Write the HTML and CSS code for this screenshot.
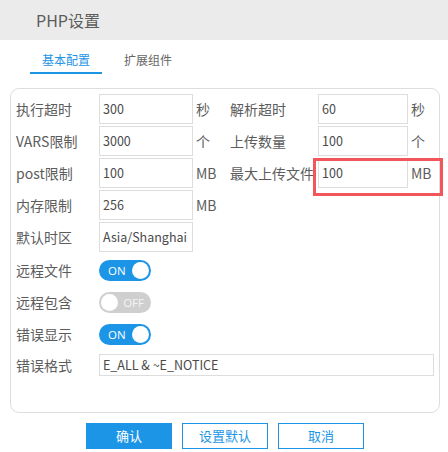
FILE: index.html
```html
<!DOCTYPE html>
<html lang="zh-CN">
<head>
<meta charset="utf-8">
<title>PHP设置</title>
<link rel="stylesheet" href="styles.css">
</head>
<body>
<div class="dialog">
  <div class="header">PHP设置</div>
  <div class="tabs">
    <div class="tab active">基本配置</div>
    <div class="tab">扩展组件</div>
  </div>
  <div class="card">
    <div class="grid">
      <div class="label">执行超时</div>
      <div class="input">300</div>
      <div class="unit">秒</div>
      <div class="label">解析超时</div>
      <div class="input">60</div>
      <div class="unit">秒</div>

      <div class="label">VARS限制</div>
      <div class="input">3000</div>
      <div class="unit">个</div>
      <div class="label">上传数量</div>
      <div class="input">100</div>
      <div class="unit">个</div>

      <div class="label">post限制</div>
      <div class="input">100</div>
      <div class="unit">MB</div>
      <div class="label">最大上传文件</div>
      <div class="highlight-group">
        <div class="input">100</div>
        <div class="unit">MB</div>
      </div>

      <div class="label">内存限制</div>
      <div class="input">256</div>
      <div class="unit">MB</div>
      <div class="filler"></div>

      <div class="label">默认时区</div>
      <div class="input">Asia/Shanghai</div>
      <div class="filler"></div>
    </div>

    <div class="switch-rows">
      <div class="switch-row">
        <div class="label">远程文件</div>
        <div class="toggle on"><span class="toggle-text">ON</span><span class="knob"></span></div>
      </div>
      <div class="switch-row">
        <div class="label">远程包含</div>
        <div class="toggle off"><span class="knob"></span><span class="toggle-text">OFF</span></div>
      </div>
      <div class="switch-row">
        <div class="label">错误显示</div>
        <div class="toggle on"><span class="toggle-text">ON</span><span class="knob"></span></div>
      </div>
      <div class="text-row">
        <div class="label">错误格式</div>
        <div class="input wide">E_ALL &amp; ~E_NOTICE</div>
      </div>
    </div>
  </div>
  <div class="buttons">
    <div class="btn primary">确认</div>
    <div class="btn">设置默认</div>
    <div class="btn">取消</div>
  </div>
</div>
</body>
</html>
```

FILE: styles.css
```css
* { box-sizing: border-box; }
html, body {
  margin: 0;
  padding: 0;
  background: #fff;
}
body {
  font-family: "Noto Sans CJK SC", "Open Sans", sans-serif;
  color: #5c5c5c;
  width: 448px;
  height: 452px;
  overflow: hidden;
}
.header {
  height: 40px;
  background: #ebebeb;
  padding-left: 36px;
  font-size: 16px;
  line-height: 40px;
  color: #5c5c5c;
}
.tabs {
  display: flex;
  padding: 9px 0 0 30px;
  height: 48px;
}
.tab {
  width: 72px;
  height: 25px;
  text-align: center;
  font-size: 12px;
  line-height: 22px;
  color: #666;
  margin-right: 10px;
}
.tab.active {
  color: #1c95e6;
  border-bottom: 2px solid #1c95e6;
}
.card {
  margin: 0 8px 0 10px;
  height: 325px;
  border: 1px solid #ddd;
  border-radius: 9px;
  padding: 5px 0 0 5px;
}
.grid {
  display: grid;
  grid-template-columns: 83px 94px 37px 88px 90px 1fr;
  grid-auto-rows: 30px;
  row-gap: 2px;
}
.label {
  font-size: 14px;
  line-height: 30px;
  color: #5c5c5c;
  white-space: nowrap;
}
.input {
  border: 1px solid #ddd;
  font-size: 12.5px;
  line-height: 27px;
  padding-left: 3px;
  color: #4a4a4a;
  white-space: nowrap;
  overflow: hidden;
}
.unit {
  font-size: 14px;
  line-height: 30px;
  padding-left: 3px;
  color: #5c5c5c;
}
.filler {
  grid-column: span 3;
}
.highlight-group {
  grid-column: span 2;
  display: flex;
  position: relative;
}
.highlight-group .input { width: 90px; }
.highlight-group::after {
  content: "";
  position: absolute;
  left: -5px;
  top: 0;
  width: 124px;
  height: 32px;
  border: 3px solid #f2555a;
}
.switch-rows {
  padding-top: 2px;
}
.switch-row {
  display: flex;
  align-items: center;
  height: 32px;
}
.switch-row .label,
.text-row .label {
  width: 83px;
}
.toggle {
  width: 52px;
  height: 21px;
  border-radius: 11px;
  display: flex;
  align-items: center;
  padding: 0 2px;
  font-family: "Open Sans", sans-serif;
  font-size: 11.5px;
  color: #fff;
}
.toggle.on {
  background: #1c95e6;
  justify-content: space-between;
  padding-left: 9px;
}
.toggle.off {
  background: #cfcfcf;
  justify-content: space-between;
  padding-right: 7px;
  color: #f4f4f4;
}
.knob {
  width: 17px;
  height: 17px;
  border-radius: 50%;
  background: #fff;
}
.text-row {
  display: flex;
  align-items: center;
  height: 30px;
}
.input.wide {
  width: 335px;
  height: 22px;
  line-height: 19px;
}
.buttons {
  display: flex;
  justify-content: center;
  gap: 10px;
  margin-top: 10px;
  padding-left: 2px;
}
.btn {
  width: 86px;
  height: 26px;
  border: 1px solid #1c95e6;
  color: #1c95e6;
  font-size: 13px;
  line-height: 24px;
  text-align: center;
}
.btn.primary {
  background: #1c95e6;
  color: #fff;
}
```
